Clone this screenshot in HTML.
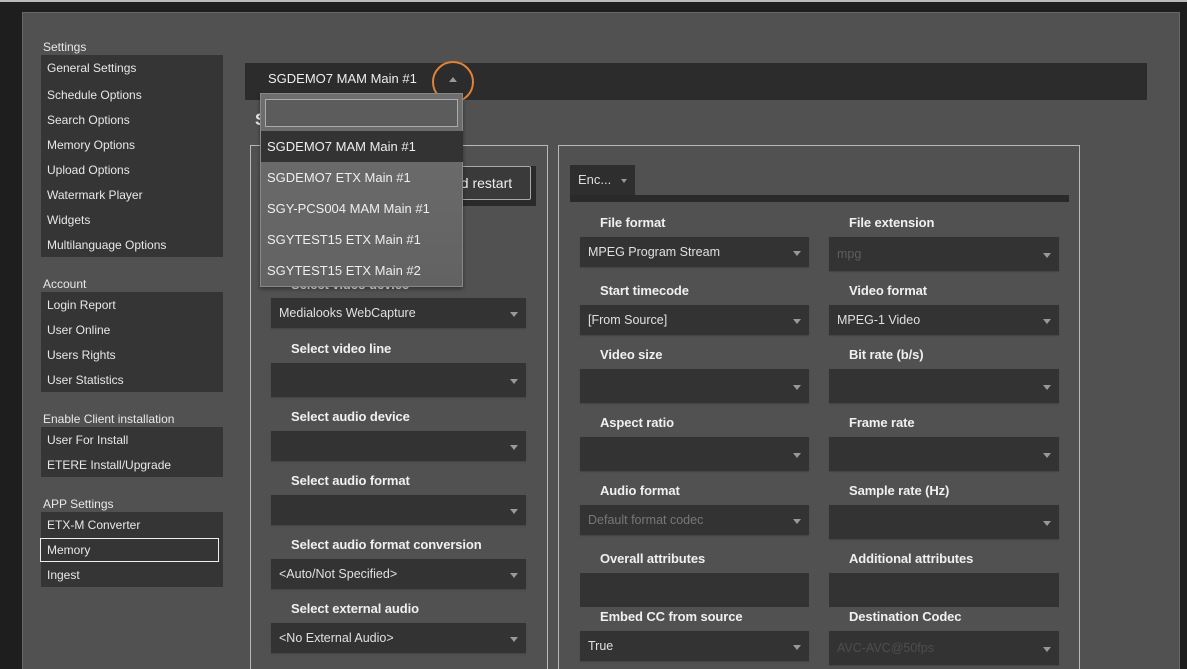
<!DOCTYPE html>
<html style="overflow:hidden;width:1187px;height:669px"><head><style>
*{margin:0;padding:0;box-sizing:border-box}
body{width:1187px;height:669px;background:#1e1e1e;position:relative;overflow:hidden;font-family:"Liberation Sans",Arial,sans-serif;color:#e6e6e6;font-size:12px}
.a{position:absolute}
.panel{left:22px;top:12px;width:1158px;height:657px;background:#515151;border:1px solid #666;border-bottom:none}
.lbl{position:absolute;font-size:12px;color:#e8e8e8;white-space:nowrap}
.box{position:absolute;left:41px;width:182px;background:#353535}
.it{position:absolute;left:47px;font-size:12px;color:#e8e8e8;white-space:nowrap}
.grp{position:absolute;border:1px solid #b8b8b8;border-bottom:none}
.h{position:absolute;font-weight:bold;font-size:13px;color:#f0f0f0;white-space:nowrap;letter-spacing:-0.1px}
.dd{position:absolute;background:#333;box-shadow:0 1px 1px #444}
.dd span{position:absolute;left:8px;top:50%;transform:translateY(-50%);font-size:12.5px;color:#e0e0e0;white-space:nowrap}
.dd span.dis{color:#5e5e5e}
.dd:after{content:"";position:absolute;right:8px;top:50%;margin-top:-1px;border-left:4px solid transparent;border-right:4px solid transparent;border-top:5px solid #999}
.opt{position:absolute;left:0;width:202px;height:31px;font-size:13px;color:#eee;padding-left:6px;line-height:31px;white-space:nowrap}
</style></head><body>
<div class="a" style="left:0;top:0;width:1187px;height:2px;background:#bbb"></div>
<div class="a panel"></div>

<div class="lbl" style="left:43px;top:40px">Settings</div>
<div class="box" style="top:55px;height:202px"></div>
<div class="it" style="top:61px">General Settings</div>
<div class="it" style="top:88px">Schedule Options</div>
<div class="it" style="top:113px">Search Options</div>
<div class="it" style="top:138px">Memory Options</div>
<div class="it" style="top:163px">Upload Options</div>
<div class="it" style="top:188px">Watermark Player</div>
<div class="it" style="top:213px">Widgets</div>
<div class="it" style="top:238px">Multilanguage Options</div>

<div class="lbl" style="left:43px;top:277px">Account</div>
<div class="box" style="top:292px;height:100px"></div>
<div class="it" style="top:298px">Login Report</div>
<div class="it" style="top:323px">User Online</div>
<div class="it" style="top:348px">Users Rights</div>
<div class="it" style="top:373px">User Statistics</div>

<div class="lbl" style="left:43px;top:412px">Enable Client installation</div>
<div class="box" style="top:427px;height:50px"></div>
<div class="it" style="top:433px">User For Install</div>
<div class="it" style="top:458px">ETERE Install/Upgrade</div>

<div class="lbl" style="left:43px;top:497px">APP Settings</div>
<div class="box" style="top:512px;height:75px"></div>
<div class="a" style="left:40px;top:538px;width:179px;height:24px;border:1px solid #eee"></div>
<div class="it" style="top:518px">ETX-M Converter</div>
<div class="it" style="top:543px">Memory</div>
<div class="it" style="top:568px">Ingest</div>

<div class="a" style="left:245px;top:63px;width:902px;height:37px;background:#2c2c2c"></div>
<div class="a" style="left:268px;top:71px;font-size:13px;color:#eee">SGDEMO7 MAM Main #1</div>
<div class="a" style="left:449px;top:77px;border-left:4px solid transparent;border-right:4px solid transparent;border-bottom:5px solid #999"></div>
<div class="a" style="left:432px;top:61px;width:42px;height:42px;border:2px solid #e0823a;border-radius:50%"></div>
<div class="a" style="left:255px;top:110px;font-size:17px;font-weight:bold;color:#eee">S</div>

<div class="grp" style="left:250px;top:145px;width:298px;height:524px"></div>
<div class="a" style="left:434px;top:166px;width:102px;height:40px;background:#2a2a2a"></div>
<div class="a" style="left:430px;top:166px;width:101px;height:34px;background:#3a3a3a;border:1px solid #aaa;border-radius:2px;font-size:14px;color:#eee;line-height:32px;padding-left:22px">nd restart</div>
<div class="h" style="left:291px;top:277px">Select video device</div>
<div class="dd" style="left:271px;top:298px;width:255px;height:30px"><span>Medialooks WebCapture</span></div>
<div class="h" style="left:291px;top:341px">Select video line</div>
<div class="dd" style="left:271px;top:363px;width:255px;height:34px"></div>
<div class="h" style="left:291px;top:409px">Select audio device</div>
<div class="dd" style="left:271px;top:431px;width:255px;height:30px"></div>
<div class="h" style="left:291px;top:473px">Select audio format</div>
<div class="dd" style="left:271px;top:495px;width:255px;height:30px"></div>
<div class="h" style="left:291px;top:537px">Select audio format conversion</div>
<div class="dd" style="left:271px;top:559px;width:255px;height:30px"><span>&lt;Auto/Not Specified&gt;</span></div>
<div class="h" style="left:291px;top:601px">Select external audio</div>
<div class="dd" style="left:271px;top:623px;width:255px;height:30px"><span>&lt;No External Audio&gt;</span></div>

<div class="grp" style="left:558px;top:145px;width:522px;height:524px"></div>
<div class="a" style="left:570px;top:165px;width:65px;height:32px;background:#2e2e2e;font-size:13px;color:#ddd;padding:7px 0 0 8px">Enc...</div>
<div class="a" style="left:621px;top:179px;border-left:3px solid transparent;border-right:3px solid transparent;border-top:4px solid #999"></div>
<div class="a" style="left:570px;top:195px;width:499px;height:7px;background:#2a2a2a"></div>

<div class="h" style="left:600px;top:215px">File format</div>
<div class="h" style="left:849px;top:215px">File extension</div>
<div class="dd" style="left:580px;top:237px;width:229px;height:30px"><span>MPEG Program Stream</span></div>
<div class="dd" style="left:829px;top:237px;width:230px;height:34px"><span class="dis">mpg</span></div>

<div class="h" style="left:600px;top:283px">Start timecode</div>
<div class="h" style="left:849px;top:283px">Video format</div>
<div class="dd" style="left:580px;top:305px;width:229px;height:30px"><span>[From Source]</span></div>
<div class="dd" style="left:829px;top:305px;width:230px;height:30px"><span>MPEG-1 Video</span></div>

<div class="h" style="left:600px;top:347px">Video size</div>
<div class="h" style="left:849px;top:347px">Bit rate (b/s)</div>
<div class="dd" style="left:580px;top:369px;width:229px;height:34px"></div>
<div class="dd" style="left:829px;top:369px;width:230px;height:34px"></div>

<div class="h" style="left:600px;top:415px">Aspect ratio</div>
<div class="h" style="left:849px;top:415px">Frame rate</div>
<div class="dd" style="left:580px;top:437px;width:229px;height:34px"></div>
<div class="dd" style="left:829px;top:437px;width:230px;height:34px"></div>

<div class="h" style="left:600px;top:483px">Audio format</div>
<div class="h" style="left:849px;top:483px">Sample rate (Hz)</div>
<div class="dd" style="left:580px;top:505px;width:229px;height:30px"><span style="color:#777">Default format codec</span></div>
<div class="dd" style="left:829px;top:505px;width:230px;height:34px"></div>

<div class="h" style="left:600px;top:551px">Overall attributes</div>
<div class="h" style="left:849px;top:551px">Additional attributes</div>
<div class="a" style="left:580px;top:573px;width:229px;height:34px;background:#333"></div>
<div class="a" style="left:829px;top:573px;width:230px;height:34px;background:#333"></div>

<div class="h" style="left:600px;top:609px">Embed CC from source</div>
<div class="h" style="left:849px;top:609px">Destination Codec</div>
<div class="dd" style="left:580px;top:631px;width:229px;height:30px"><span>True</span></div>
<div class="dd" style="left:829px;top:631px;width:230px;height:34px"><span style="color:#4e4e4e">AVC-AVC@50fps</span></div>

<div class="a" style="left:260px;top:93px;width:203px;height:194px;background:linear-gradient(#6e6e6e,#626262);border:1px solid #888;box-shadow:0 2px 4px rgba(0,0,0,.4)">
  <div class="a" style="left:4px;top:5px;width:193px;height:28px;border:1px solid #aaa;background:#5c5c5c"></div>
  <div class="opt" style="top:37px;background:#333">SGDEMO7 MAM Main #1</div>
  <div class="opt" style="top:68px">SGDEMO7 ETX Main #1</div>
  <div class="opt" style="top:99px">SGY-PCS004 MAM Main #1</div>
  <div class="opt" style="top:130px">SGYTEST15 ETX Main #1</div>
  <div class="opt" style="top:161px">SGYTEST15 ETX Main #2</div>
</div>
</body></html>
